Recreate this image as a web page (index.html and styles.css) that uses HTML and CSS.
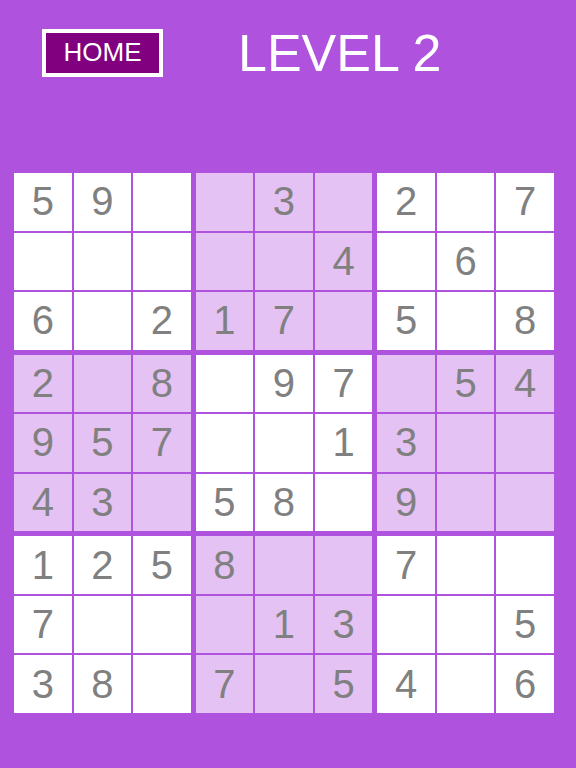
FILE: index.html
```html
<!DOCTYPE html>
<html lang="en">
  <head>
    <meta charset="UTF-8" />
    <meta name="viewport" content="width=device-width, initial-scale=1.0" />
    <title>Sudoku</title>
    <link rel="stylesheet" href="styles.css">
  </head>
  <body>
    <div class="header">
      <div class="homeBtn">HOME</div>
      <div class="levelLabel">LEVEL 2</div>
    </div>
    <div id="board" class="board">
      <div class="block">
        <div class="cell">5</div><div class="cell">9</div><div class="cell"></div>
        <div class="cell"></div><div class="cell"></div><div class="cell"></div>
        <div class="cell">6</div><div class="cell"></div><div class="cell">2</div>
      </div>
      <div class="block light">
        <div class="cell"></div><div class="cell">3</div><div class="cell"></div>
        <div class="cell"></div><div class="cell"></div><div class="cell">4</div>
        <div class="cell">1</div><div class="cell">7</div><div class="cell"></div>
      </div>
      <div class="block">
        <div class="cell">2</div><div class="cell"></div><div class="cell">7</div>
        <div class="cell"></div><div class="cell">6</div><div class="cell"></div>
        <div class="cell">5</div><div class="cell"></div><div class="cell">8</div>
      </div>
      <div class="block light">
        <div class="cell">2</div><div class="cell"></div><div class="cell">8</div>
        <div class="cell">9</div><div class="cell">5</div><div class="cell">7</div>
        <div class="cell">4</div><div class="cell">3</div><div class="cell"></div>
      </div>
      <div class="block">
        <div class="cell"></div><div class="cell">9</div><div class="cell">7</div>
        <div class="cell"></div><div class="cell"></div><div class="cell">1</div>
        <div class="cell">5</div><div class="cell">8</div><div class="cell"></div>
      </div>
      <div class="block light">
        <div class="cell"></div><div class="cell">5</div><div class="cell">4</div>
        <div class="cell">3</div><div class="cell"></div><div class="cell"></div>
        <div class="cell">9</div><div class="cell"></div><div class="cell"></div>
      </div>
      <div class="block">
        <div class="cell">1</div><div class="cell">2</div><div class="cell">5</div>
        <div class="cell">7</div><div class="cell"></div><div class="cell"></div>
        <div class="cell">3</div><div class="cell">8</div><div class="cell"></div>
      </div>
      <div class="block light">
        <div class="cell">8</div><div class="cell"></div><div class="cell"></div>
        <div class="cell"></div><div class="cell">1</div><div class="cell">3</div>
        <div class="cell">7</div><div class="cell"></div><div class="cell">5</div>
      </div>
      <div class="block">
        <div class="cell">7</div><div class="cell"></div><div class="cell"></div>
        <div class="cell"></div><div class="cell"></div><div class="cell">5</div>
        <div class="cell">4</div><div class="cell"></div><div class="cell">6</div>
      </div>
    </div>
  </body>
</html>
```

FILE: styles.css
```css
body {
  margin: 0;
  height: 768px;
  background-color: #af52de;
  font-family: "Liberation Sans", Arial, sans-serif;
}
.header {
  display: flex;
  align-items: center;
  padding: 29px 0 0 42px;
}
.homeBtn {
  box-sizing: border-box;
  width: 121px;
  height: 48px;
  border: 4px solid white;
  background-color: purple;
  color: white;
  font-size: 26px;
  display: flex;
  align-items: center;
  justify-content: center;
  padding-bottom: 2px;
}
.levelLabel {
  margin-left: 75px;
  color: white;
  font-size: 52px;
  line-height: 48px;
}
.board {
  width: 540px;
  height: 540px;
  margin: 96px 0 0 14px;
  display: grid;
  grid-template-columns: repeat(3, 1fr);
  grid-template-rows: repeat(3, 1fr);
  gap: 5px;
}
.block {
  display: grid;
  grid-template-columns: repeat(3, 1fr);
  grid-template-rows: repeat(3, 1fr);
  gap: 2px;
}
.cell {
  background-color: white;
  color: #808080;
  font-size: 40px;
  display: flex;
  align-items: center;
  justify-content: center;
}
.light .cell {
  background-color: #e4c2f3;
}
```
